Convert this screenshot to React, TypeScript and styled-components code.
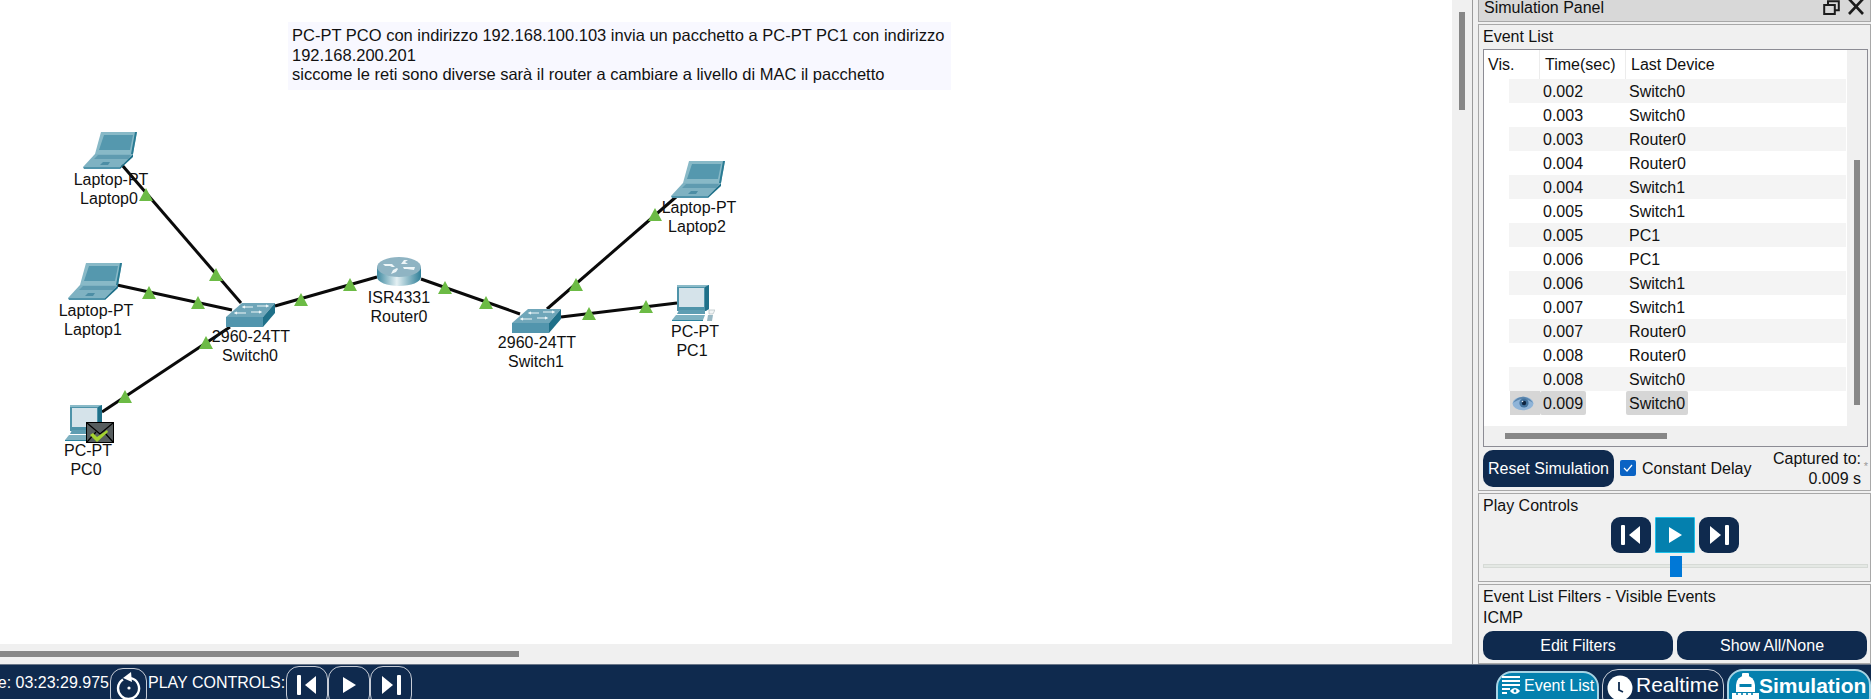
import React from "react";
import styled, { createGlobalStyle } from "styled-components";

const navy = "#0f2a4e";
const teal = "#0480ae";

const GlobalStyle = createGlobalStyle`
  html, body {
    margin: 0;
    padding: 0;
    background: #f0f0f0;
  }
  * {
    box-sizing: border-box;
  }
`;

const Page = styled.div`
  width: 1871px;
  height: 699px;
  display: flex;
  flex-direction: column;
  overflow: hidden;
  font-family: "Liberation Sans", Arial, sans-serif;
  font-size: 16px;
  color: #111;
`;

const Main = styled.div`
  height: 664px;
  display: flex;
  background: #f0f0f0;
`;

const Workspace = styled.div`
  width: 1473px;
  display: flex;
  flex-direction: column;
  border-right: 1px solid #9a9a9a;
`;

const CanvasRow = styled.div`
  height: 644px;
  display: flex;
`;

const Canvas = styled.div`
  position: relative;
  width: 1452px;
  background: #fff;
  overflow: hidden;
`;

const VTrack = styled.div<{ $top: number }>`
  width: 20px;
  padding: ${({ $top }) => $top}px 7px 0;
  background: #f0f0f0;
`;

const VThumb = styled.div<{ $height: number }>`
  width: 6px;
  height: ${({ $height }) => $height}px;
  background: #878787;
`;

const HTrack = styled.div<{ $left: number }>`
  height: 20px;
  padding: 7px 0 7px ${({ $left }) => $left}px;
  background: #f0f0f0;
`;

const HThumb = styled.div<{ $width: number }>`
  width: ${({ $width }) => $width}px;
  height: 6px;
  background: #878787;
`;

const NoteBox = styled.div`
  position: absolute;
  left: 288px;
  top: 22px;
  width: 663px;
  height: 68px;
  padding: 4px 4px;
  background: #f8f8ff;
  font-size: 16.5px;
  line-height: 19.5px;
  white-space: pre-line;
`;

const Wires = styled.svg`
  position: absolute;
  left: 0;
  top: 0;
`;

const IconSpot = styled.div<{ $x: number; $y: number }>`
  position: absolute;
  left: ${({ $x }) => $x}px;
  top: ${({ $y }) => $y}px;
  line-height: 0;
`;

const NodeLabel = styled.div<{ $cx: number; $cy: number }>`
  position: absolute;
  left: ${({ $cx }) => $cx}px;
  top: ${({ $cy }) => $cy - 9}px;
  transform: translateX(-50%);
  line-height: 20px;
  white-space: nowrap;
`;

const Side = styled.div`
  width: 393px;
  margin-left: 5px;
  display: flex;
  flex-direction: column;
`;

const PanelTitle = styled.div`
  height: 22px;
  padding: 0 6px 0 5px;
  display: flex;
  align-items: flex-start;
  justify-content: space-between;
  background: #d8d8d8;
  border: 1px solid #a8a8a8;
  border-top: 0;
  line-height: 16px;
`;

const TitleIcons = styled.div`
  display: flex;
  gap: 8px;
`;

const Panel = styled.section<{ $height: number }>`
  height: ${({ $height }) => $height}px;
  margin-top: 2px;
  padding: 0 2px 0 4px;
  display: flex;
  flex-direction: column;
  background: #f0f0f0;
  border: 1px solid #a8a8a8;
`;

const PanelLabel = styled.div`
  height: 21px;
  line-height: 24px;
  white-space: nowrap;
`;

const EventBox = styled.div`
  height: 398px;
  margin-top: 3px;
  display: flex;
  flex-direction: column;
  border: 1px solid #8c8c94;
`;

const EventBody = styled.div`
  height: 376px;
  display: flex;
`;

const EventTable = styled.div`
  width: 364px;
  background: #fff;
`;

const HeadRow = styled.div`
  height: 29px;
  display: grid;
  grid-template-columns: 56px 86px 1fr;
`;

const HeadCell = styled.div<{ $pad: number }>`
  padding-left: ${({ $pad }) => $pad}px;
  line-height: 29px;
  border-right: 1px solid #ececec;

  &:last-child {
    border-right: 0;
  }
`;

const EventRow = styled.div<{ $striped: boolean }>`
  height: 24px;
  margin-left: 25px;
  margin-right: 1px;
  display: grid;
  grid-template-columns: 31px 86px 1fr;
  background: ${({ $striped }) => ($striped ? "#f4f4f4" : "#fff")};
`;

const RowCell = styled.div<{ $selected?: boolean }>`
  justify-self: start;
  height: 24px;
  padding: 0 3px;
  line-height: 26px;
  border-radius: 2px;
  background: ${({ $selected }) => ($selected ? "#d6d6d6" : "transparent")};
`;

const EyeCell = styled.div<{ $selected: boolean }>`
  width: 30px;
  height: 24px;
  padding: 5px 0 0 2px;
  margin-left: 1px;
  line-height: 0;
  background: ${({ $selected }) => ($selected ? "#d6d6d6" : "transparent")};
`;

const ResetRow = styled.div`
  position: relative;
  height: 43px;
  display: flex;
  align-items: center;
`;

const NavyButton = styled.button<{ $width: number; $height: number }>`
  width: ${({ $width }) => $width}px;
  height: ${({ $height }) => $height}px;
  padding: 2px 0 0;
  border: 0;
  border-radius: 10px;
  background: ${navy};
  color: #fff;
  font: inherit;
`;

const CheckBox = styled.span`
  width: 16px;
  height: 16px;
  margin: 0 6px 0 6px;
  display: inline-flex;
  align-items: center;
  justify-content: center;
  border-radius: 2px;
  background: #0a63c4;
`;

const DelayLabel = styled.span`
  padding-top: 2px;
  white-space: nowrap;
`;

const Captured = styled.div`
  margin-left: auto;
  padding: 1px 7px 0 0;
  text-align: right;
  line-height: 20px;
  white-space: nowrap;
`;

const Star = styled.span`
  position: absolute;
  right: 0;
  top: 13px;
  font-size: 11px;
  color: #999;
`;

const PlayRow = styled.div`
  margin-top: 2px;
  display: flex;
  justify-content: center;
  gap: 4px;
  padding-right: 1px;
`;

const PlayButton = styled.button<{ $active?: boolean }>`
  width: 40px;
  height: 36px;
  padding: 0;
  display: flex;
  align-items: center;
  justify-content: center;
  border: ${({ $active }) => ($active ? "1px solid #1cc0ea" : "0")};
  border-radius: ${({ $active }) => ($active ? "1px" : "9px")};
  background: ${({ $active }) => ($active ? teal : navy)};
`;

const Slider = styled.div`
  position: relative;
  height: 4px;
  margin-top: 11px;
  background: #e4e8e4;
  border: 1px solid #d6dad6;
`;

const SliderThumb = styled.div`
  position: absolute;
  left: 186px;
  top: -9px;
  width: 12px;
  height: 21px;
  background: #0078d7;
`;

const FilterButtons = styled.div`
  margin-top: 4px;
  display: flex;
  gap: 4px;
`;

const BottomBar = styled.footer`
  height: 35px;
  display: flex;
  align-items: flex-start;
  overflow: hidden;
  background: ${navy};
  border-top: 1px solid #6a7688;
  color: #fff;
`;

const ClockText = styled.div`
  width: 109px;
  height: 34px;
  display: flex;
  justify-content: flex-end;
  overflow: hidden;
  line-height: 35px;
  white-space: nowrap;
`;

const ResetClock = styled.button`
  width: 37px;
  height: 42px;
  margin: 3px 0 0 1px;
  padding: 3px 0 0;
  display: flex;
  align-items: flex-start;
  justify-content: center;
  border: 1px solid #c6ccd6;
  border-radius: 13px;
  background: transparent;
`;

const PlayCaption = styled.div`
  margin-left: 1px;
  line-height: 35px;
  white-space: nowrap;
`;

const BarButtons = styled.div`
  display: flex;
  margin-left: 1px;
`;

const BarButton = styled.button`
  width: 42px;
  height: 42px;
  margin-top: 1px;
  padding: 0 0 5px;
  display: flex;
  align-items: center;
  justify-content: center;
  border: 1px solid #c6ccd6;
  border-radius: 13px;
  background: transparent;
`;

const ModeGroup = styled.div`
  margin-left: auto;
  display: flex;
  align-items: flex-start;
  gap: 3px;
`;

const ModeButton = styled.button<{ $active: boolean; $top: number; $width: number; $size: number; $bold?: boolean; $pad: number; $gap: number }>`
  width: ${({ $width }) => $width}px;
  height: 44px;
  margin-top: ${({ $top }) => $top}px;
  padding: 0 0 0 ${({ $pad }) => $pad}px;
  display: flex;
  align-items: flex-start;
  gap: ${({ $gap }) => $gap}px;
  border: ${({ $active }) => ($active ? "2px solid #a7d4e4" : "1px solid #c6ccd6")};
  border-radius: 16px;
  background: ${({ $active }) => ($active ? teal : "transparent")};
  color: #fff;
  font-family: inherit;
  font-size: ${({ $size }) => $size}px;
  font-weight: ${({ $bold }) => ($bold ? 700 : 400)};
  white-space: nowrap;
`;

const ModeIcon = styled.span<{ $top: number }>`
  margin-top: ${({ $top }) => $top}px;
  line-height: 0;
`;

const ModeText = styled.span<{ $line: number }>`
  line-height: ${({ $line }) => $line}px;
`;

const LaptopIcon = () => (
  <svg width="54" height="38" viewBox="0 0 54 38">
    <polygon points="18,0 54,0 50,22 12,22" fill="#88b9c7" />
    <polygon points="52,0 54,0 50,22 48,22" fill="#2a7b93" />
    <polygon points="21,3 50,3 47,18 16,18" fill="#5598ae" />
    <polygon points="12,22 50,22 37,35 0,35" fill="#7fb2c2" />
    <polygon points="15,23 48,23 45,27 11,27" fill="#5f9bb0" />
    <polygon points="20,30 27,30 25,33 17,33" fill="#4d8ea5" />
    <polygon points="0,35 37,35 37,37 1,37" fill="#4f93aa" />
    <polygon points="37,35 50,22 50,25 37,37" fill="#1f7089" />
  </svg>
);

const SwitchIcon = () => (
  <svg width="49" height="24" viewBox="0 0 49 24">
    <polygon points="16,0 49,0 37,14 0,14" fill="#6fa6b9" />
    <polygon points="0,14 37,14 37,24 0,24" fill="#5295ad" />
    <polygon points="37,14 49,0 49,10 37,24" fill="#1f7089" />
    <g stroke="#eef6f8" strokeWidth="1.2" fill="none">
      <path d="M18 4h9M19 3l-2 1 2 1" />
      <path d="M31 3h10M40 2l2 1-2 1" />
      <path d="M10 10h10M11 9l-2 1 2 1" />
      <path d="M25 9h9M33 8l2 1-2 1" />
    </g>
  </svg>
);

const RouterIcon = () => (
  <svg width="44" height="30" viewBox="0 0 44 30">
    <defs>
      <linearGradient id="routerBody" x1="0" x2="1" y1="0" y2="0">
        <stop offset="0" stopColor="#3f8aa1" />
        <stop offset="0.45" stopColor="#e4f0f3" />
        <stop offset="1" stopColor="#2f7f98" />
      </linearGradient>
    </defs>
    <path d="M0 10v10c0 5 10 9 22 9s22-4 22-9V10z" fill="url(#routerBody)" />
    <ellipse cx="22" cy="10" rx="22" ry="10" fill="#8fb4c3" />
    <g fill="#eef6f8">
      <path d="M6 7l9 0 3 3 -3 0-2-1-5 0z" />
      <path d="M24 7l3-4 4 0-3 2 3 2z" />
      <path d="M26 10l12 0 -1 3-7-1-3 0z" />
      <path d="M16 13l4-2 1 1-2 3-5 2z" />
    </g>
  </svg>
);

const PcIcon = () => (
  <svg width="43" height="36" viewBox="0 0 43 36">
    <polygon points="5,0 37,0 37,24 34,26 5,26" fill="#4e93a9" />
    <polygon points="5,0 37,0 34,2 5,2" fill="#8abac8" />
    <polygon points="33,2 37,0 37,24 33,26" fill="#1f7089" />
    <rect x="7" y="3" width="25" height="19" fill="#d5e3ea" />
    <polygon points="7,25 33,25 33,29 5,29" fill="#5f9db2" />
    <polygon points="4,30 33,30 31,35 0,35" fill="#7fb2c2" />
    <polygon points="0,35 31,35 31,36 0,36" fill="#2f85a0" />
    <path d="M37 25h6l-2 4h-4z" fill="#f2f5f6" stroke="#a9b6ba" strokeWidth="0.6" />
    <polygon points="36,30 41,30 40,36 35,36" fill="#98b8c4" />
  </svg>
);

const EnvelopeIcon = () => (
  <svg width="28" height="21" viewBox="0 0 28 21">
    <rect x="0.5" y="0.5" width="27" height="20" fill="#565d5e" stroke="#000" />
    <path d="M1 1l13 11L27 1M1 20l9-10M27 20l-9-10" fill="none" stroke="#000" strokeWidth="1.2" />
    <polygon points="4,13 7,11 11,15 21,8 22,10 11,20" fill="#a4d32f" />
  </svg>
);

const EyeIcon = () => (
  <svg width="22" height="15" viewBox="0 0 22 15">
    <ellipse cx="11" cy="7.5" rx="10.5" ry="6.8" fill="#8fb4d8" />
    <path d="M1 7c3-5 8-7 12-6s6 3 8 6c-3-2-6-4-10-4S4 5 1 7z" fill="#5c86ad" />
    <circle cx="12" cy="7" r="4.6" fill="#44749f" />
    <circle cx="12" cy="7" r="2.2" fill="#0f2540" />
    <circle cx="10.5" cy="5.5" r="0.8" fill="#dce9f5" />
  </svg>
);

const RestoreIcon = () => (
  <svg width="17" height="15" viewBox="0 0 17 15">
    <path d="M1.2 5h10.6v9H1.2zM5 4.5V1.2h10.8v9H12" fill="none" stroke="#1c1c1c" strokeWidth="2" />
  </svg>
);

const CloseIcon = () => (
  <svg width="16" height="15" viewBox="0 0 16 15">
    <path d="M1 -1l14 15M15 -1L1 14" fill="none" stroke="#1c1c1c" strokeWidth="2.6" />
  </svg>
);

const SkipBackGlyph = () => (
  <svg width="20" height="20" viewBox="0 0 20 20">
    <rect x="0" y="0" width="4" height="20" fill="#fff" rx="1" />
    <polygon points="8,10 19,1 19,19" fill="#fff" />
  </svg>
);

const PlayGlyph = () => (
  <svg width="13" height="16" viewBox="0 0 13 16">
    <polygon points="0,0 13,8 0,16" fill="#fff" />
  </svg>
);

const SkipNextGlyph = () => (
  <svg width="20" height="20" viewBox="0 0 20 20">
    <polygon points="1,1 12,10 1,19" fill="#fff" />
    <rect x="16" y="0" width="4" height="20" fill="#fff" rx="1" />
  </svg>
);

const ReplayIcon = () => (
  <svg width="26" height="27" viewBox="0 0 26 27">
    <path d="M7 7.5a10.5 10.5 0 1 0 8-1.3" fill="none" stroke="#fff" strokeWidth="2.4" />
    <polygon points="15,0 16,10 7,6" fill="#fff" />
    <circle cx="13" cy="16" r="1.6" fill="#fff" />
  </svg>
);

const EventListIcon = () => (
  <svg width="19" height="18" viewBox="0 0 19 18">
    <path d="M0 1h18M0 5h18M0 9h18M0 13h8M0 17h5" stroke="#fff" strokeWidth="1.8" />
    <path d="M8 15c3-4 7-4 10 0-3 4-7 4-10 0z" fill="#fff" />
    <circle cx="13" cy="15" r="1.4" fill={teal} />
  </svg>
);

const ClockIcon = () => (
  <svg width="26" height="26" viewBox="0 0 26 26">
    <circle cx="13" cy="13" r="12.5" fill="#fff" />
    <path d="M12 7v8l4 2" fill="none" stroke={navy} strokeWidth="1.8" />
  </svg>
);

const SimulationIcon = () => (
  <svg width="27" height="26" viewBox="0 0 27 26">
    <path d="M4 19v-7a9.5 9.5 0 0 1 19 0v7z" fill="#fff" />
    <rect x="10" y="0" width="7" height="4" fill="#fff" rx="1" />
    <rect x="7.5" y="11" width="12" height="3" fill={teal} />
    <rect x="0" y="20" width="27" height="6" fill="#fff" />
    <path d="M5 20v2M10 20v2M15 20v2M20 20v2" stroke={teal} strokeWidth="1.6" />
  </svg>
);

const wires = [
  [122, 165, 241, 303],
  [117, 285, 232, 310],
  [102, 412, 230, 327],
  [275, 306, 377, 277],
  [421, 279, 520, 314],
  [676, 197, 547, 309],
  [677, 303, 561, 317],
];

const linkLights = [
  [146, 195], [216, 275], [149, 293], [198, 303], [125, 397], [206, 343],
  [301, 300], [350, 285], [445, 288], [486, 303], [655, 215], [576, 285],
  [646, 307], [589, 314],
];

const devices = [
  { Icon: LaptopIcon, x: 83, y: 132, top: "Laptop-PT", topX: 111, topY: 179, name: "Laptop0", nameX: 109 },
  { Icon: LaptopIcon, x: 68, y: 263, top: "Laptop-PT", topX: 96, topY: 310, name: "Laptop1", nameX: 93 },
  { Icon: LaptopIcon, x: 671, y: 161, top: "Laptop-PT", topX: 699, topY: 207, name: "Laptop2", nameX: 697 },
  { Icon: SwitchIcon, x: 226, y: 303, top: "2960-24TT", topX: 251, topY: 336, name: "Switch0", nameX: 250 },
  { Icon: SwitchIcon, x: 512, y: 309, top: "2960-24TT", topX: 537, topY: 342, name: "Switch1", nameX: 536 },
  { Icon: RouterIcon, x: 377, y: 257, top: "ISR4331", topX: 399, topY: 297, name: "Router0", nameX: 399 },
  { Icon: PcIcon, x: 65, y: 405, top: "PC-PT", topX: 88, topY: 450, name: "PC0", nameX: 86 },
  { Icon: PcIcon, x: 672, y: 285, top: "PC-PT", topX: 695, topY: 331, name: "PC1", nameX: 692 },
];

const events = [
  ["0.002", "Switch0"],
  ["0.003", "Switch0"],
  ["0.003", "Router0"],
  ["0.004", "Router0"],
  ["0.004", "Switch1"],
  ["0.005", "Switch1"],
  ["0.005", "PC1"],
  ["0.006", "PC1"],
  ["0.006", "Switch1"],
  ["0.007", "Switch1"],
  ["0.007", "Router0"],
  ["0.008", "Router0"],
  ["0.008", "Switch0"],
  ["0.009", "Switch0"],
];

const App = () => (
  <Page>
    <GlobalStyle />
    <Main>
      <Workspace>
        <CanvasRow>
          <Canvas>
            <NoteBox>
              {"PC-PT PCO con indirizzo 192.168.100.103 invia un pacchetto a PC-PT PC1 con indirizzo\n192.168.200.201\nsiccome le reti sono diverse sarà il router a cambiare a livello di MAC il pacchetto"}
            </NoteBox>
            <Wires width="1452" height="644">
              {wires.map(([x1, y1, x2, y2]) => (
                <line key={`${x1}-${y1}`} x1={x1} y1={y1} x2={x2} y2={y2} stroke="#0a0a0a" strokeWidth="3" />
              ))}
            </Wires>
            {devices.map(({ Icon, x, y, top, topX, topY, name, nameX }) => (
              <React.Fragment key={name}>
                <IconSpot $x={x} $y={y}>
                  <Icon />
                </IconSpot>
                <NodeLabel $cx={topX} $cy={topY}>{top}</NodeLabel>
                <NodeLabel $cx={nameX} $cy={topY + 19}>{name}</NodeLabel>
              </React.Fragment>
            ))}
            <Wires width="1452" height="644">
              {linkLights.map(([x, y]) => (
                <polygon key={`${x}-${y}`} points={`${x},${y - 7} ${x - 7},${y + 6} ${x + 7},${y + 6}`} fill="#6cbb45" />
              ))}
            </Wires>
            <IconSpot $x={86} $y={422}>
              <EnvelopeIcon />
            </IconSpot>
          </Canvas>
          <VTrack $top={12}>
            <VThumb $height={98} />
          </VTrack>
        </CanvasRow>
        <HTrack $left={0}>
          <HThumb $width={519} />
        </HTrack>
      </Workspace>
      <Side>
        <PanelTitle>
          <span>Simulation Panel</span>
          <TitleIcons>
            <RestoreIcon />
            <CloseIcon />
          </TitleIcons>
        </PanelTitle>
        <Panel $height={468}>
          <PanelLabel>Event List</PanelLabel>
          <EventBox>
            <EventBody>
              <EventTable>
                <HeadRow>
                  <HeadCell $pad={4}>Vis.</HeadCell>
                  <HeadCell $pad={5}>Time(sec)</HeadCell>
                  <HeadCell $pad={5}>Last Device</HeadCell>
                </HeadRow>
                {events.map(([time, device], i) => {
                  const selected = i === events.length - 1;
                  return (
                    <EventRow key={`${time}-${device}`} $striped={i % 2 === 0}>
                      <EyeCell $selected={selected}>{selected && <EyeIcon />}</EyeCell>
                      <RowCell $selected={selected}>{time}</RowCell>
                      <RowCell $selected={selected}>{device}</RowCell>
                    </EventRow>
                  );
                })}
              </EventTable>
              <VTrack $top={110}>
                <VThumb $height={245} />
              </VTrack>
            </EventBody>
            <HTrack $left={21}>
              <HThumb $width={162} />
            </HTrack>
          </EventBox>
          <ResetRow>
            <NavyButton $width={131} $height={37}>Reset Simulation</NavyButton>
            <CheckBox>
              <svg width="10" height="8" viewBox="0 0 10 8">
                <path d="M1 4l3 3 5-6" fill="none" stroke="#fff" strokeWidth="1.2" />
              </svg>
            </CheckBox>
            <DelayLabel>Constant Delay</DelayLabel>
            <Captured>
              Captured to:
              <br />
              0.009 s
            </Captured>
            <Star>*</Star>
          </ResetRow>
        </Panel>
        <Panel $height={90}>
          <PanelLabel>Play Controls</PanelLabel>
          <PlayRow>
            <PlayButton>
              <SkipBackGlyph />
            </PlayButton>
            <PlayButton $active>
              <PlayGlyph />
            </PlayButton>
            <PlayButton>
              <SkipNextGlyph />
            </PlayButton>
          </PlayRow>
          <Slider>
            <SliderThumb />
          </Slider>
        </Panel>
        <Panel $height={81}>
          <PanelLabel>Event List Filters - Visible Events</PanelLabel>
          <PanelLabel>ICMP</PanelLabel>
          <FilterButtons>
            <NavyButton $width={190} $height={29}>Edit Filters</NavyButton>
            <NavyButton $width={190} $height={29}>Show All/None</NavyButton>
          </FilterButtons>
        </Panel>
      </Side>
    </Main>
    <BottomBar>
      <ClockText>
        <span>Time: 03:23:29.975</span>
      </ClockText>
      <ResetClock>
        <ReplayIcon />
      </ResetClock>
      <PlayCaption>PLAY CONTROLS:</PlayCaption>
      <BarButtons>
        <BarButton>
          <SkipBackGlyph />
        </BarButton>
        <BarButton>
          <PlayGlyph />
        </BarButton>
        <BarButton>
          <SkipNextGlyph />
        </BarButton>
      </BarButtons>
      <ModeGroup>
        <ModeButton $active $top={6} $width={103} $size={16} $pad={4} $gap={3}>
          <ModeIcon $top={3}>
            <EventListIcon />
          </ModeIcon>
          <ModeText $line={26}>Event List</ModeText>
        </ModeButton>
        <ModeButton $active={false} $top={4} $width={122} $size={21} $pad={4} $gap={3}>
          <ModeIcon $top={5}>
            <ClockIcon />
          </ModeIcon>
          <ModeText $line={30}>Realtime</ModeText>
        </ModeButton>
        <ModeButton $active $top={4} $width={144} $size={21} $bold $pad={3} $gap={0}>
          <ModeIcon $top={2}>
            <SimulationIcon />
          </ModeIcon>
          <ModeText $line={29}>Simulation</ModeText>
        </ModeButton>
      </ModeGroup>
    </BottomBar>
  </Page>
);

export default App;
